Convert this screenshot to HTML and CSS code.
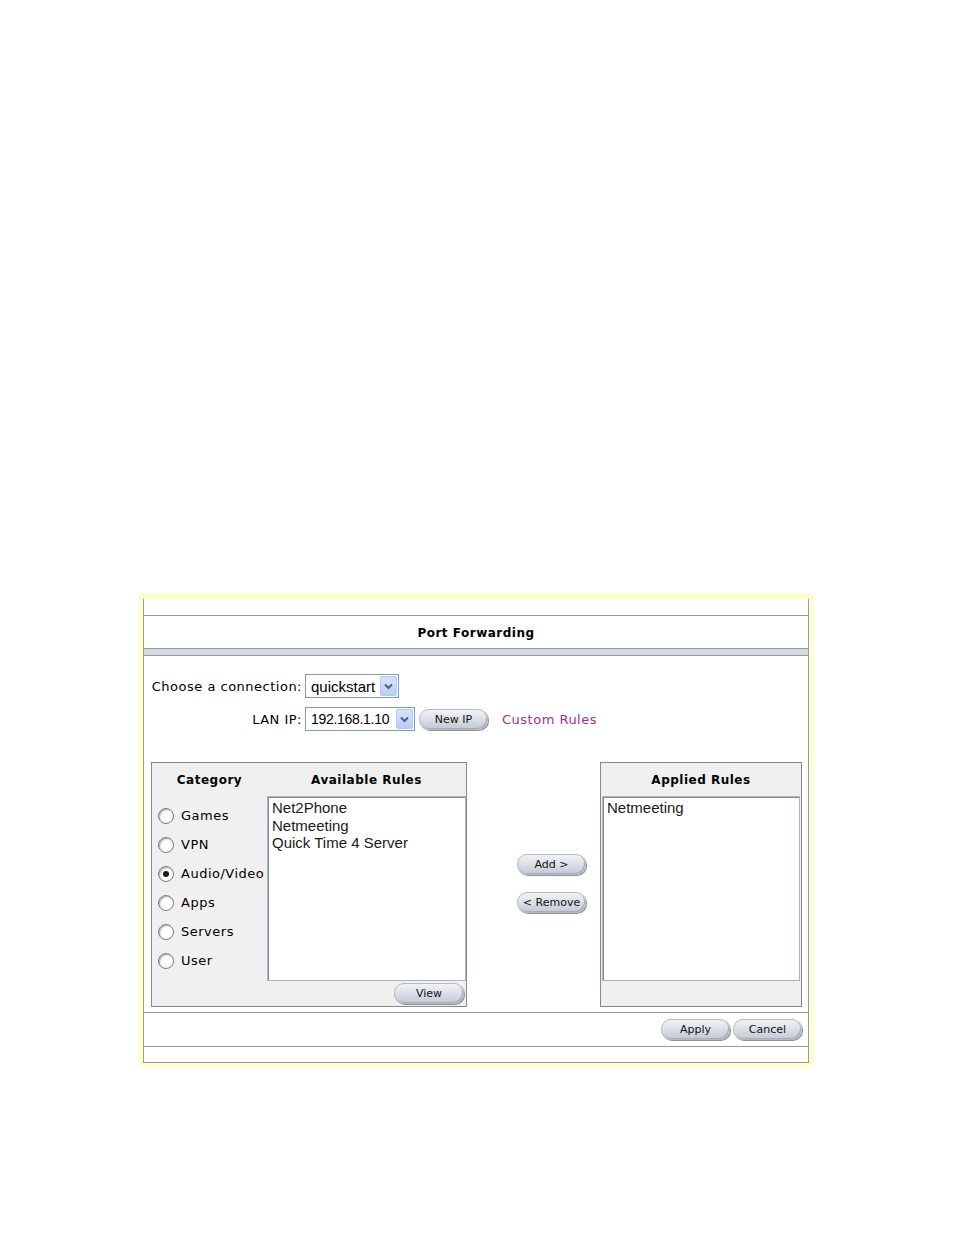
FILE: index.html
```html
<!DOCTYPE html>
<html>
<head>
<meta charset="utf-8">
<title>Port Forwarding</title>
<link rel="stylesheet" href="styles.css">
</head>
<body>
<div class="frame">
  <div class="panel">
    <div class="toprow"></div>
    <div class="title">Port Forwarding</div>
    <div class="band"></div>
    <div class="content">
      <div class="form">
        <span class="lbl">Choose a connection:</span>
        <div class="ctrl">
          <div class="select w-conn"><span class="val">quickstart</span><span class="arrow"><svg width="9" height="7" viewBox="0 0 9 7"><path d="M1 1.5 L4.5 5 L8 1.5" fill="none" stroke="#4d6185" stroke-width="2"/></svg></span></div>
        </div>
        <span class="lbl">LAN IP:</span>
        <div class="ctrl">
          <div class="select w-ip"><span class="val val-ip">192.168.1.10</span><span class="arrow"><svg width="9" height="7" viewBox="0 0 9 7"><path d="M1 1.5 L4.5 5 L8 1.5" fill="none" stroke="#4d6185" stroke-width="2"/></svg></span></div>
          <span class="btn">New IP</span>
          <a class="link">Custom Rules</a>
        </div>
      </div>
      <div class="rules">
        <div class="box box-left">
          <div class="box-head head-left">
            <span>Category</span>
            <span>Available Rules</span>
          </div>
          <div class="box-body">
            <div class="cats">
              <div class="cat"><span class="radio"></span>Games</div>
              <div class="cat"><span class="radio"></span>VPN</div>
              <div class="cat"><span class="radio checked"></span>Audio/Video</div>
              <div class="cat"><span class="radio"></span>Apps</div>
              <div class="cat"><span class="radio"></span>Servers</div>
              <div class="cat"><span class="radio"></span>User</div>
            </div>
            <div class="listbox list-left">
              <div>Net2Phone</div>
              <div>Netmeeting</div>
              <div>Quick Time 4 Server</div>
            </div>
          </div>
          <div class="box-foot"><span class="btn">View</span></div>
        </div>
        <div class="mid">
          <span class="btn">Add &gt;</span>
          <span class="btn">&lt; Remove</span>
        </div>
        <div class="box box-right">
          <div class="box-head">Applied Rules</div>
          <div class="listbox list-right">
            <div>Netmeeting</div>
          </div>
        </div>
      </div>
    </div>
    <div class="footer">
      <span class="btn">Apply</span>
      <span class="btn">Cancel</span>
    </div>
    <div class="bottomrow"></div>
  </div>
</div>
</body>
</html>
```
FILE: styles.css
```css
html, body {
  margin: 0;
  padding: 0;
  background: #ffffff;
}

body {
  font-family: "DejaVu Sans", Verdana, sans-serif;
  font-size: 13px;
  letter-spacing: 0.5px;
  color: #000;
}

.frame {
  margin: 593px 0 0 139px;
  width: 674px;
  box-sizing: border-box;
  padding: 6px 4px 4px 4px;
  background: #ffffcc;
}

.panel {
  background: #ffffff;
  border-left: 1px solid #999999;
  border-right: 1px solid #999999;
  border-bottom: 1px solid #999999;
}

.toprow {
  height: 16px;
  border-bottom: 1px solid #999999;
}

.title {
  height: 32px;
  display: flex;
  align-items: center;
  justify-content: center;
  font-weight: bold;
  font-size: 12px;
  letter-spacing: 0.5px;
  padding-top: 1px;
  box-sizing: border-box;
}

.band {
  height: 6px;
  background: #d5d9e0;
  border-top: 1px solid #999999;
  border-bottom: 1px solid #999999;
}

.content {
  padding: 18px 6px 5px 7px;
}

.form {
  display: grid;
  grid-template-columns: 151px auto;
  column-gap: 3px;
  row-gap: 9px;
  align-items: center;
}

.lbl {
  text-align: right;
  white-space: nowrap;
}

.ctrl {
  display: flex;
  align-items: center;
}

.select {
  box-sizing: border-box;
  height: 24px;
  border: 1px solid #7f9db9;
  background: #fff;
  display: flex;
  align-items: center;
  justify-content: space-between;
  font-family: "Liberation Sans", Arial, sans-serif;
  font-size: 15px;
  letter-spacing: 0;
  padding-left: 5px;
}

.w-conn { width: 94px; }
.w-ip { width: 110px; }

.val {
  white-space: nowrap;
}

.val-ip {
  font-size: 14px;
  letter-spacing: -0.3px;
}

.arrow {
  box-sizing: border-box;
  width: 17px;
  height: 20px;
  margin-right: 1px;
  border: 1px solid #b7c9ef;
  border-radius: 2px;
  background: linear-gradient(#d8e3fb, #b9cdf3);
  display: flex;
  align-items: center;
  justify-content: center;
}

.btn {
  box-sizing: border-box;
  display: inline-flex;
  align-items: center;
  justify-content: center;
  width: 69px;
  height: 21px;
  border-radius: 10px;
  border: 1px solid #b4b9c2;
  background: linear-gradient(#f1f3f6, #dde1e8 45%, #c3c9d3);
  box-shadow: 1px 1px 0 #8e9298, inset -1px -1px 0 #a9aeb6;
  font-family: "DejaVu Sans", Verdana, sans-serif;
  font-size: 11px;
  letter-spacing: 0;
  color: #111111;
  white-space: nowrap;
}

.ctrl .btn {
  margin-left: 4px;
}

.link {
  margin-left: 14px;
  color: #993399;
  white-space: nowrap;
}

.rules {
  display: flex;
  margin-top: 31px;
  align-items: flex-start;
}

.box {
  box-sizing: border-box;
  height: 245px;
  border: 1px solid #888888;
  background: #f0f0f0;
}

.box-left { width: 316px; }
.box-right { width: 202px; }

.box-head {
  height: 33px;
  display: flex;
  align-items: center;
  justify-content: center;
  font-weight: bold;
  font-size: 12px;
  letter-spacing: 0.5px;
}

.head-left {
  display: grid;
  grid-template-columns: 115px 199px;
  justify-items: center;
}

.box-body {
  display: flex;
}

.cats {
  width: 115px;
  box-sizing: border-box;
  padding: 5px 0 0 6px;
}

.cat {
  display: flex;
  align-items: center;
  height: 29px;
  white-space: nowrap;
}

.radio {
  box-sizing: border-box;
  width: 16px;
  height: 16px;
  border-radius: 50%;
  border: 1px solid #7c7c7c;
  background: radial-gradient(circle at 60% 60%, #ffffff 40%, #e4e4e4 100%);
  box-shadow: inset 1px 1px 1px #b0b0b0;
  margin-right: 7px;
  flex: none;
  position: relative;
}

.radio.checked::after {
  content: "";
  position: absolute;
  left: 4px;
  top: 4px;
  width: 6px;
  height: 6px;
  border-radius: 50%;
  background: #1a1a1a;
}

.listbox {
  box-sizing: border-box;
  height: 185px;
  background: #ffffff;
  border: 1px solid #a3b5cb;
  box-shadow: inset 1px 1px 0 #8c8c8c;
  padding: 2px 0 0 4px;
  font-family: "Liberation Sans", Arial, sans-serif;
  font-size: 15px;
  letter-spacing: 0;
  line-height: 17.5px;
  color: #1a1a1a;
  white-space: nowrap;
}

.list-left { width: 199px; }

.list-right {
  width: 198px;
  margin-left: 1px;
}

.box-foot {
  display: flex;
  justify-content: flex-end;
  padding: 2px 2px 0 0;
}

.box-foot .btn {
  width: 70px;
}

.mid {
  width: 133px;
  box-sizing: border-box;
  padding: 92px 0 0 50px;
  display: flex;
  flex-direction: column;
  gap: 17px;
}

.footer {
  border-top: 1px solid #999999;
  border-bottom: 1px solid #999999;
  display: flex;
  justify-content: flex-end;
  align-items: flex-start;
  gap: 3px;
  padding: 6px 6px 0 0;
  height: 27px;
}

.bottomrow {
  height: 15px;
}
```
